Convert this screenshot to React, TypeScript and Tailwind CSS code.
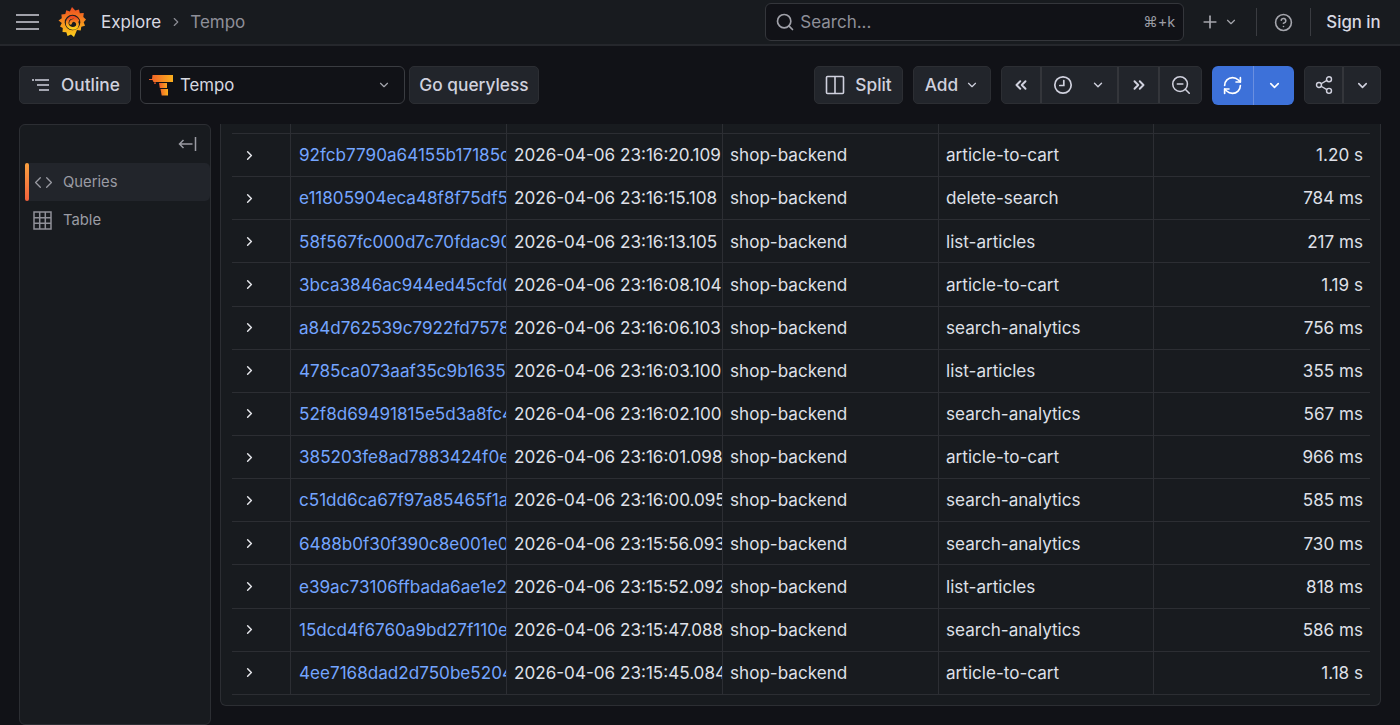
import React from "react";
import { ChevronDown, ChevronRight, ChevronsLeft, ChevronsRight, Search, Plus, CircleHelp, ZoomOut, Share2, RefreshCw, Code } from "lucide-react";

const rows = [
  ["92fcb7790a64155b17185c0", "2026-04-06 23:16:20.109", "article-to-cart", "1.20 s"],
  ["e11805904eca48f8f75df51", "2026-04-06 23:16:15.108", "delete-search", "784 ms"],
  ["58f567fc000d7c70fdac90a", "2026-04-06 23:16:13.105", "list-articles", "217 ms"],
  ["3bca3846ac944ed45cfd0aa", "2026-04-06 23:16:08.104", "article-to-cart", "1.19 s"],
  ["a84d762539c7922fd757812", "2026-04-06 23:16:06.103", "search-analytics", "756 ms"],
  ["4785ca073aaf35c9b163512", "2026-04-06 23:16:03.100", "list-articles", "355 ms"],
  ["52f8d69491815e5d3a8fc41", "2026-04-06 23:16:02.100", "search-analytics", "567 ms"],
  ["385203fe8ad7883424f0e12", "2026-04-06 23:16:01.098", "article-to-cart", "966 ms"],
  ["c51dd6ca67f97a85465f1a2", "2026-04-06 23:16:00.095", "search-analytics", "585 ms"],
  ["6488b0f30f390c8e001e012", "2026-04-06 23:15:56.093", "search-analytics", "730 ms"],
  ["e39ac73106ffbada6ae1e21", "2026-04-06 23:15:52.092", "list-articles", "818 ms"],
  ["15dcd4f6760a9bd27f110e1", "2026-04-06 23:15:47.088", "search-analytics", "586 ms"],
  ["4ee7168dad2d750be520412", "2026-04-06 23:15:45.084", "article-to-cart", "1.18 s"],
];

const cols = "grid grid-cols-[59px_216px_216px_216px_215px_1fr]";
const btn = "h-[38px] flex items-center rounded-[5px] border border-[#2c2e33] bg-[#22252b] text-[#d0d1de] font-medium text-[17.3px]";

function Logo() {
  return (
    <svg width="30" height="30" viewBox="0 0 30 30" aria-hidden="true">
      <defs>
        <linearGradient id="gl" x1="0" y1="1" x2="0" y2="0">
          <stop offset="0" stopColor="#fcd11b" />
          <stop offset="1" stopColor="#ee4a22" />
        </linearGradient>
      </defs>
      <path fill="url(#gl)" d="M15 0l3.200 3.500 3.800-1 .8 3.800 4-.2-.5 4 2.700 2.400-2.300 2.800 1.300 3.500-3.700 1-.6 3.800-3.700-.6L17 30l-3-2.500-3.500 1.500-1.200-3.800-3.800-.3.300-3.800L3 19.500l1.800-3.500L1.500 13.500l3.300-2.200-.4-3.900 3.900-.4 1-3.800 3.500 1.200z" />
      <circle cx="15.500" cy="15.500" r="7.800" fill="#181b1f" />
      <path fill="none" stroke="url(#gl)" strokeWidth="2.800" strokeLinecap="round" d="M20.800 13.500a5.600 5.600 0 1 0-1 6.200c1.500-1.900.8-5.200-1.900-6.100-2.300-.8-4.300 1-4.300 2.700" />
    </svg>
  );
}

function TempoLogo() {
  return (
    <svg width="24" height="21" viewBox="0 0 24 21" aria-hidden="true">
      <defs>
        <linearGradient id="tl" x1="0" y1="0" x2="1" y2="0">
          <stop offset="0" stopColor="#f05a28" />
          <stop offset="1" stopColor="#fbb01e" />
        </linearGradient>
      </defs>
      <path fill="url(#tl)" d="M3.500 0H24v7H4.500L3.500 5H0V4h3z" />
      <path fill="url(#tl)" d="M10 8h8v5h-7.200zM11.500 14H19v6.500h-6.300z" />
      <rect x="5" y="7.500" width="2" height="1.200" fill="#f05a28" />
    </svg>
  );
}

function Clock() {
  return (
    <svg width="20" height="20" viewBox="0 0 20 20" fill="none" stroke="#d0d1de" strokeWidth="1.700" strokeLinecap="round" aria-hidden="true">
      <circle cx="10" cy="10" r="8.200" />
      <path d="M10.800 5.500v5H6.800" />
    </svg>
  );
}

function Outline() {
  return (
    <svg width="20" height="16" viewBox="0 0 20 16" fill="none" stroke="#d0d1de" strokeWidth="1.500" aria-hidden="true">
      <path d="M1 3h2M4 3h14M6 8h12M8 13h10" />
    </svg>
  );
}

function SplitIcon() {
  return (
    <svg width="20" height="20" viewBox="0 0 20 20" fill="none" stroke="#d0d1de" strokeWidth="1.600" aria-hidden="true">
      <rect x="1.500" y="1.500" width="17" height="17" rx="1" />
      <path d="M10 1.500v17" />
    </svg>
  );
}

function GridIcon() {
  return (
    <svg width="19" height="19" viewBox="0 0 19 19" fill="none" stroke="#8f9098" strokeWidth="1.500" aria-hidden="true">
      <rect x="1" y="1" width="17" height="17" />
      <path d="M6.700 1v17M12.300 1v17M1 6.700h17M1 12.300h17" />
    </svg>
  );
}

function Collapse() {
  return (
    <svg width="19" height="16" viewBox="0 0 19 16" fill="none" stroke="#9a9ba3" strokeWidth="1.500" aria-hidden="true">
      <path d="M14.500 8H1.500M5.500 4l-4 4 4 4M17.500 1v14" />
    </svg>
  );
}

export default function App() {
  return (
    <div className="h-[725px] w-[1400px] overflow-hidden bg-[#111217] text-[#ccccdc] font-['Inter',sans-serif] flex flex-col">
      <header className="h-[46px] shrink-0 bg-[#181b1f] border-b-2 border-[#25272c] flex items-center pl-[16px]">
        <div className="w-[23px] flex flex-col gap-[4.500px]">
          <span className="h-[2.500px] bg-[#a0a1a9]" />
          <span className="h-[2.500px] bg-[#a0a1a9]" />
          <span className="h-[2.500px] bg-[#a0a1a9]" />
        </div>
        <div className="ml-[18px] w-[30px] h-[30px]"><Logo /></div>
        <span className="ml-[14px] mt-[1px] text-[17px] text-[#d8d9e2]">Explore</span>
        <ChevronRight size={14} className="ml-[8px] text-[#8a8b93]" />
        <span className="ml-[7px] mt-[1px] text-[17px] text-[#8e8f98]">Tempo</span>
        <div className="ml-[520px] w-[419px] h-[38px] rounded-[6px] border border-[#34363b] bg-[#111217] flex items-center pl-[9px] pr-[8px]">
          <Search size={20} className="text-[#a0a1a9]" />
          <span className="ml-[5px] mt-[1px] text-[17px] text-[#8e8f98] flex-1">Search...</span>
          <span className="text-[14.500px] text-[#9a9ba3]">⌘+k</span>
        </div>
        <Plus size={20} className="ml-[16px] text-[#a5a6ad]" />
        <ChevronDown size={14} className="ml-[4px] text-[#a5a6ad]" />
        <div className="ml-[18px] w-px h-[28px] bg-[#3a3c41]" />
        <CircleHelp size={19} className="ml-[17px] text-[#a5a6ad]" />
        <div className="ml-[17px] w-px h-[28px] bg-[#3a3c41]" />
        <span className="ml-[15px] mt-[1px] whitespace-nowrap text-[16.800px] font-medium text-[#d8d9e2]">Sign in</span>
      </header>

      <div className="h-[78px] shrink-0 flex items-center pl-[19px] pr-[19px]">
        <div className={`${btn} w-[112px] pl-[11px] gap-[10px] justify-start`}><Outline /><span>Outline</span></div>
        <div className="ml-[9px] w-[265px] h-[38px] rounded-[6px] border border-[#3a3c41] bg-[#111217] flex items-center pl-[8px] pr-[13px]">
          <TempoLogo />
          <span className="ml-[7px] mt-[1px] text-[16.800px] text-[#d8d9e2] flex-1">Tempo</span>
          <ChevronDown size={14} className="text-[#a5a6ad]" />
        </div>
        <div className={`${btn} ml-[4px] w-[130px] justify-center`}>Go queryless</div>
        <div className={`${btn} ml-auto w-[89px] justify-center gap-[10px]`}><SplitIcon /><span>Split</span></div>
        <div className={`${btn} ml-[10px] w-[78px] justify-center gap-[7px]`}><span>Add</span><ChevronDown size={14} /></div>
        <div className={`${btn} ml-[10px] w-[201px] divide-x-2 divide-[#34363b]`}>
          <div className="w-[40px] h-full flex items-center justify-center"><ChevronsLeft size={18} strokeWidth={2.600} /></div>
          <div className="w-[77px] h-full flex items-center pl-[11px] gap-[18px]"><Clock /><ChevronDown size={14} strokeWidth={2.400} /></div>
          <div className="w-[41px] h-full flex items-center justify-center"><ChevronsRight size={18} strokeWidth={2.600} /></div>
          <div className="flex-1 h-full flex items-center justify-center"><ZoomOut size={22} strokeWidth={1.700} /></div>
        </div>
        <div className="ml-[10px] w-[82px] h-[39px] rounded-[6px] bg-[#3d71d9] flex items-center text-white divide-x divide-[#6a8fe0]">
          <div className="w-[42px] h-full flex items-center justify-center"><RefreshCw size={21} strokeWidth={1.900} /></div>
          <div className="flex-1 h-full flex items-center justify-center"><ChevronDown size={15} strokeWidth={2.500} /></div>
        </div>
        <div className={`${btn} ml-[10px] w-[77px] divide-x-2 divide-[#34363b]`}>
          <div className="w-[39px] h-full flex items-center justify-center"><Share2 size={20} strokeWidth={1.700} /></div>
          <div className="flex-1 h-full flex items-center justify-center"><ChevronDown size={15} strokeWidth={2.500} /></div>
        </div>
      </div>

      <main className="flex-1 min-h-0 flex pl-[19px] pr-[19px]">
        <aside className="w-[192px] h-[601px] shrink-0 rounded-[6px] border border-[#2c2e33] bg-[#181b1f] pl-[5px]">
          <div className="h-[38px] flex items-center justify-end pr-[13px]"><Collapse /></div>
          <div className="h-[38px] rounded-[5px] bg-[#22252b] flex items-center relative">
            <span className="absolute left-0 top-0 h-full w-[4px] rounded-[2px] bg-gradient-to-b from-[#f9a03f] to-[#f2603c]" />
            <Code size={19} className="ml-[9px] text-[#9a9ba3]" strokeWidth={1.600} />
            <span className="ml-[10px] text-[14.800px] text-[#9a9ba3]">Queries</span>
          </div>
          <div className="h-[38px] flex items-center">
            <span className="ml-[8px] flex"><GridIcon /></span>
            <span className="ml-[11px] text-[14.800px] text-[#9a9ba3]">Table</span>
          </div>
        </aside>
        <section className="ml-[9px] flex-1 h-[582px] rounded-b-[6px] border-x border-b border-[#2c2e33] bg-[#181b1f] pl-[11px] pr-[10px] overflow-hidden">
          <div className={`${cols} h-[10px] border-b border-[#2c2e33]`}>
            {[0, 1, 2, 3, 4, 5].map((i) => (
              <div key={i} className={i < 5 ? "border-r border-[#2c2e33]" : ""} />
            ))}
          </div>
          {rows.map((r) => (
            <div key={r[0]} className={`${cols} h-[43.150px] border-b border-[#2c2e33] text-[17.100px] text-[#dfe0e8]`}>
              <div className="border-r border-[#2c2e33] flex items-center pl-[10px]"><ChevronRight size={15} strokeWidth={2.400} className="text-[#e4e5ea]" /></div>
              <div className="border-r border-[#2c2e33] flex items-center pl-[8px] overflow-hidden whitespace-nowrap text-[#74a5ff]">{r[0]}</div>
              <div className="border-r border-[#2c2e33] flex items-center pl-[7px] overflow-hidden whitespace-nowrap">{r[1]}</div>
              <div className="border-r border-[#2c2e33] flex items-center pl-[7px] overflow-hidden whitespace-nowrap">shop-backend</div>
              <div className="border-r border-[#2c2e33] flex items-center pl-[7px] overflow-hidden whitespace-nowrap">{r[2]}</div>
              <div className="flex items-center justify-end pr-[7px] whitespace-nowrap">{r[3]}</div>
            </div>
          ))}
        </section>
      </main>
    </div>
  );
}
